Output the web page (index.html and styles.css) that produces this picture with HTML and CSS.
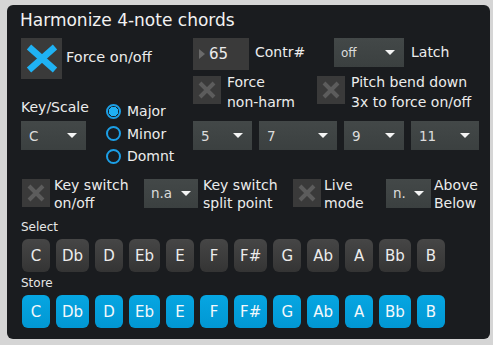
FILE: index.html
```html
<!DOCTYPE html>
<html lang="en">
<head>
  <meta charset="UTF-8">
  <title>Harmonize 4-note chords</title>
  <link rel="stylesheet" href="styles.css">
</head>
<body>
  <div class="panel">
    <h1 class="title">Harmonize 4-note chords</h1>

    <div class="top">
      <div class="left">
        <div class="force">
          <span class="xbox big">
            <svg width="41" height="41" viewBox="0 0 41 41"><path d="M8 9 L34 32 M34 9 L8 32" stroke="#1fb2f4" stroke-width="6.5" fill="none"/></svg>
          </span>
          <span class="lbl">Force on/off</span>
        </div>
        <div class="keyscale">
          <div class="key-col">
            <div class="lbl">Key/Scale</div>
            <div class="dd dd-key"><span>C</span><i class="caret"></i></div>
          </div>
          <div class="radios">
            <div class="radio on"><span class="dot"></span>Major</div>
            <div class="radio"><span class="dot"></span>Minor</div>
            <div class="radio"><span class="dot"></span>Domnt</div>
          </div>
        </div>
      </div>

      <div class="right">
        <div class="row r1">
          <div class="num"><i class="tri"></i>65</div>
          <span class="lbl contr">Contr#</span>
          <div class="dd dd-latch small"><span>off</span><i class="caret"></i></div>
          <span class="lbl latch">Latch</span>
        </div>
        <div class="row r2">
          <div class="opt opt-harm">
            <span class="xbox off">
              <svg width="28" height="28" viewBox="0 0 28 28"><path d="M7 7 L21 21 M21 7 L7 21" stroke="#5c5c5c" stroke-width="4" fill="none"/></svg>
            </span>
            <span class="lbl two">Force<br>non-harm</span>
          </div>
          <div class="opt">
            <span class="xbox off">
              <svg width="28" height="28" viewBox="0 0 28 28"><path d="M7 7 L21 21 M21 7 L7 21" stroke="#5c5c5c" stroke-width="4" fill="none"/></svg>
            </span>
            <span class="lbl two">Pitch bend down<br>3x to force on/off</span>
          </div>
        </div>
        <div class="row r3">
          <div class="dd w5"><span>5</span><i class="caret"></i></div>
          <div class="dd w7"><span>7</span><i class="caret"></i></div>
          <div class="dd w9"><span>9</span><i class="caret"></i></div>
          <div class="dd w11"><span>11</span><i class="caret"></i></div>
        </div>
      </div>
    </div>

    <div class="switch-row">
      <div class="opt g1">
        <span class="xbox off">
          <svg width="28" height="28" viewBox="0 0 28 28"><path d="M7 7 L21 21 M21 7 L7 21" stroke="#5c5c5c" stroke-width="4" fill="none"/></svg>
        </span>
        <span class="lbl two">Key switch<br>on/off</span>
      </div>
      <div class="opt g2">
        <div class="dd dd-na"><span>n.a</span><i class="caret"></i></div>
        <span class="lbl two">Key switch<br>split point</span>
      </div>
      <div class="opt g3">
        <span class="xbox off">
          <svg width="28" height="28" viewBox="0 0 28 28"><path d="M7 7 L21 21 M21 7 L7 21" stroke="#5c5c5c" stroke-width="4" fill="none"/></svg>
        </span>
        <span class="lbl two">Live<br>mode</span>
      </div>
      <div class="opt g4">
        <div class="dd dd-n"><span>n.</span><i class="caret"></i></div>
        <span class="lbl two">Above<br>Below</span>
      </div>
    </div>

    <div class="label-sm">Select</div>
    <div class="keys">
      <span class="key">C</span><span class="key">Db</span><span class="key">D</span><span class="key">Eb</span>
      <span class="key">E</span><span class="key">F</span><span class="key">F#</span><span class="key">G</span>
      <span class="key">Ab</span><span class="key">A</span><span class="key">Bb</span><span class="key">B</span>
    </div>
    <div class="label-sm">Store</div>
    <div class="keys store">
      <span class="key">C</span><span class="key">Db</span><span class="key">D</span><span class="key">Eb</span>
      <span class="key">E</span><span class="key">F</span><span class="key">F#</span><span class="key">G</span>
      <span class="key">Ab</span><span class="key">A</span><span class="key">Bb</span><span class="key">B</span>
    </div>
  </div>
</body>
</html>
```

FILE: styles.css
```css
body {
  margin: 0;
  background-color: #d5d5d5;
  font-family: "DejaVu Sans", sans-serif;
  color: #ececec;
}
.panel {
  box-sizing: border-box;
  width: 483px;
  height: 334px;
  margin: 5px 0 0 7px;
  padding: 5px 10px 0 14px;
  background-color: #1a1c1f;
  border-radius: 6px;
}
.title {
  margin: 0 0 0 -1px;
  font-size: 17px;
  font-weight: normal;
  line-height: 20px;
  color: #f2f2f2;
}
.lbl {
  font-size: 14px;
  line-height: 17px;
  white-space: nowrap;
}
.lbl.two {
  line-height: 18px;
}

/* checkbox squares */
.xbox {
  display: flex;
  flex: none;
  background-color: #3a3a3a;
}
.xbox.big {
  width: 41px;
  height: 41px;
}
.xbox.off {
  width: 28px;
  height: 28px;
}

/* dropdowns */
.dd {
  box-sizing: border-box;
  display: flex;
  align-items: center;
  justify-content: space-between;
  height: 29px;
  padding: 0 9px 0 8px;
  background: linear-gradient(#434848, #3b4040);
  font-size: 13.5px;
  color: #dcdcdc;
  flex: none;
}
.dd.small {
  font-size: 12px;
}
.caret {
  width: 0;
  height: 0;
  border-left: 5px solid transparent;
  border-right: 5px solid transparent;
  border-top: 5px solid #f4f4f4;
}

.top {
  display: flex;
  height: 140px;
  margin-top: 8px;
}
.left {
  width: 172px;
}
.force {
  display: flex;
  align-items: center;
  gap: 4px;
}
.force .lbl {
  font-size: 14.5px;
  margin-top: -3px;
}
.keyscale {
  display: flex;
  margin-top: 20px;
}
.key-col {
  width: 85px;
}
.dd-key {
  width: 65px;
  margin-top: 5px;
}
.radios {
  margin-top: 1px;
}
.radio {
  display: flex;
  align-items: center;
  gap: 6px;
  height: 22.5px;
  font-size: 14px;
}
.dot {
  box-sizing: border-box;
  width: 15px;
  height: 15px;
  border: 2px solid #1c9fe6;
  border-radius: 50%;
}
.radio.on .dot {
  background: radial-gradient(circle, #1fb0f4 0 4.5px, transparent 5px);
}

.right {
  flex: 1;
}
.row {
  display: flex;
}
.r1 {
  align-items: center;
  height: 32px;
}
.num {
  display: flex;
  align-items: center;
  width: 56px;
  height: 32px;
  background-color: #3a3a3a;
  font-size: 15px;
  flex: none;
}
.tri {
  width: 0;
  height: 0;
  margin: 0 4px 0 6px;
  border-top: 5px solid transparent;
  border-bottom: 5px solid transparent;
  border-left: 6px solid #6a6a6a;
}
.contr {
  width: 79px;
  margin-left: 6px;
  margin-top: -3px;
}
.dd-latch {
  width: 70px;
  padding-left: 7px;
  align-self: flex-start;
}
.latch {
  margin-left: 7px;
  margin-top: -3px;
}
.r2 {
  margin-top: 6px;
  height: 28px;
}
.opt {
  display: flex;
  align-items: flex-start;
  gap: 6px;
}
.opt-harm {
  width: 124px;
}
.r2 .lbl.two {
  margin-top: -3px;
  line-height: 19.5px;
}
.r3 {
  margin-top: 17px;
  gap: 7px;
}
.w5 { width: 59px; }
.w7 { width: 78px; }
.w9 { width: 60px; }
.w11 { width: 68px; }

.switch-row {
  display: flex;
  align-items: center;
  height: 30px;
}
.switch-row .opt {
  align-items: center;
  flex: none;
}
.g1 {
  width: 122px;
  margin-left: 1px;
  gap: 4px;
}
.g2 {
  width: 149px;
  gap: 5px;
}
.g3 {
  width: 93px;
  gap: 3px;
}
.g4 {
  gap: 3px;
}
.dd-na {
  width: 54px;
  padding: 0 7px;
}
.dd-n {
  width: 45px;
  padding: 0 7px;
}
.switch-row .lbl.two {
  padding-top: 2px;
}

.label-sm {
  margin-top: 12px;
  font-size: 12px;
  line-height: 14px;
  color: #e6e6e6;
}
.label-sm + .keys {
  margin-top: 5px;
}
.keys + .label-sm {
  margin-top: 4px;
}
.keys {
  display: flex;
  gap: 6px;
  margin-left: 1px;
}
.key {
  box-sizing: border-box;
  display: flex;
  align-items: center;
  justify-content: center;
  min-width: 28px;
  height: 33px;
  padding: 0 6px;
  border-radius: 6px;
  background: linear-gradient(#464646, #343434);
  font-size: 15px;
  color: #ececec;
}
.store .key {
  background: linear-gradient(#06a6e2, #0197d3);
  color: #f4f8fb;
}
```
